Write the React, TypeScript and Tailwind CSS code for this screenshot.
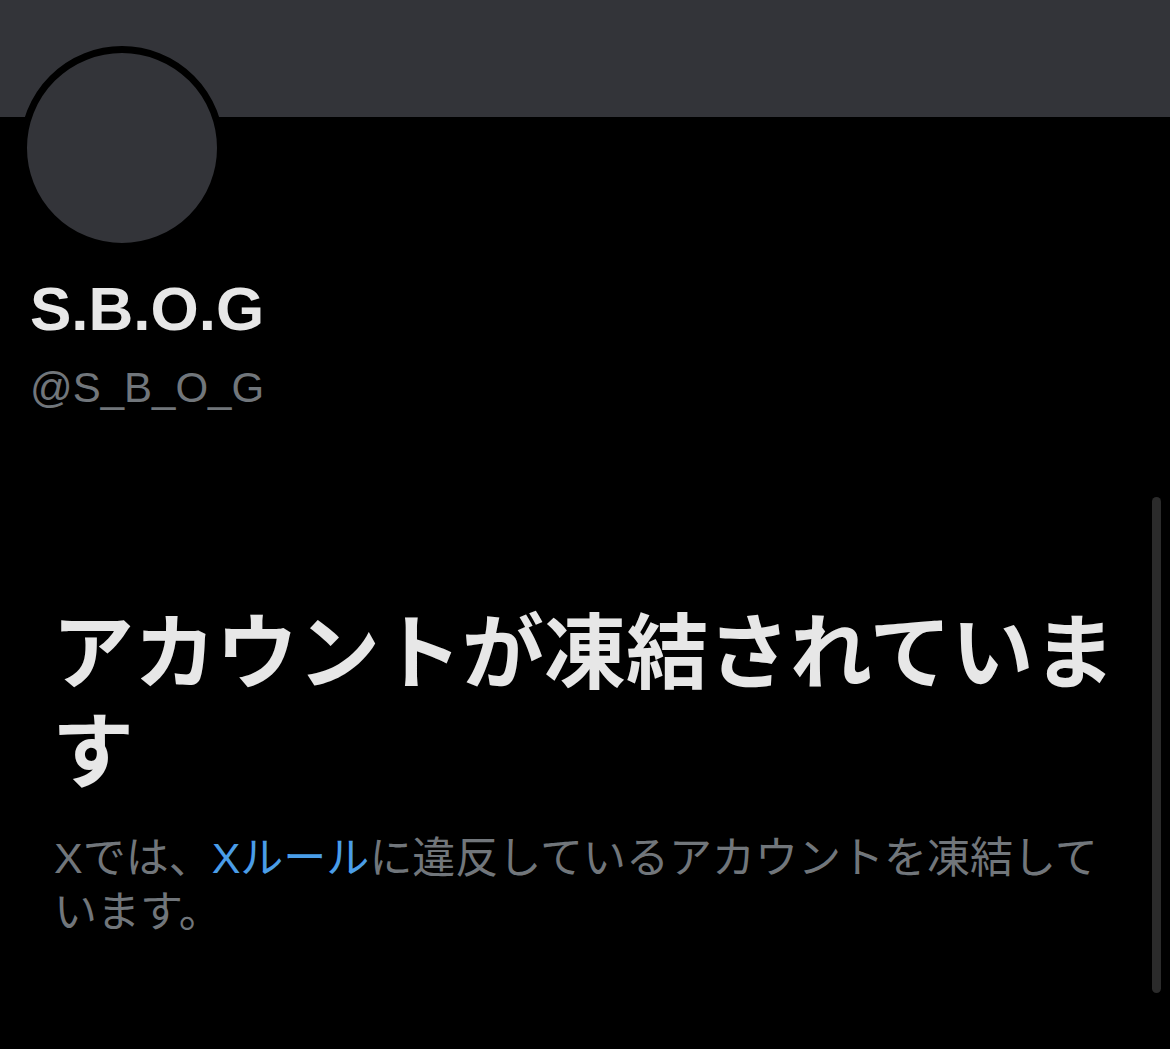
export default function App() {
    const font = { fontFamily: '"Liberation Sans", "Noto Sans CJK JP", sans-serif' };

    return (
        <div className="relative h-[1049px] w-[1170px] overflow-hidden bg-black" style={font}>
            {/* banner */}
            <div className="h-[117px] w-full bg-[#333439]" />

            {/* avatar overlaps banner */}
            <div className="absolute left-[20px] top-[46px] h-[204px] w-[204px] rounded-full border-[7px] border-black bg-[#333439]" />

            <div className="px-[30px] pt-[155px]">
                <div className="text-[62px] font-bold leading-[74px] text-[#e7e7e7]">S.B.O.G</div>
                <div className="mt-[14px] text-[42px] leading-[56px] text-[#71767b]">@S_B_O_G</div>
            </div>

            <div className="pl-[57px] pr-[40px] pt-[181px]">
                <h1 className="-ml-[5px] w-[1090px] text-[82px] font-bold leading-[99px] text-[#e7e7e7]" style={{ fontFamily: '"Noto Sans CJK JP", sans-serif' }}>
                    アカウントが凍結されていま<br />す
                </h1>
                <p className="-ml-[3px] mt-[36px] text-[43px] leading-[54px] text-[#71767b]">
                    Xでは、<span className="text-[#4a9de8]">Xルール</span>に違反しているアカウントを凍結して<br />います。
                </p>
            </div>

            {/* scrollbar */}
            <div className="absolute left-[1152px] top-[497px] h-[496px] w-[9px] rounded-full bg-[#2b2b2b]" />
        </div>
    );
}
